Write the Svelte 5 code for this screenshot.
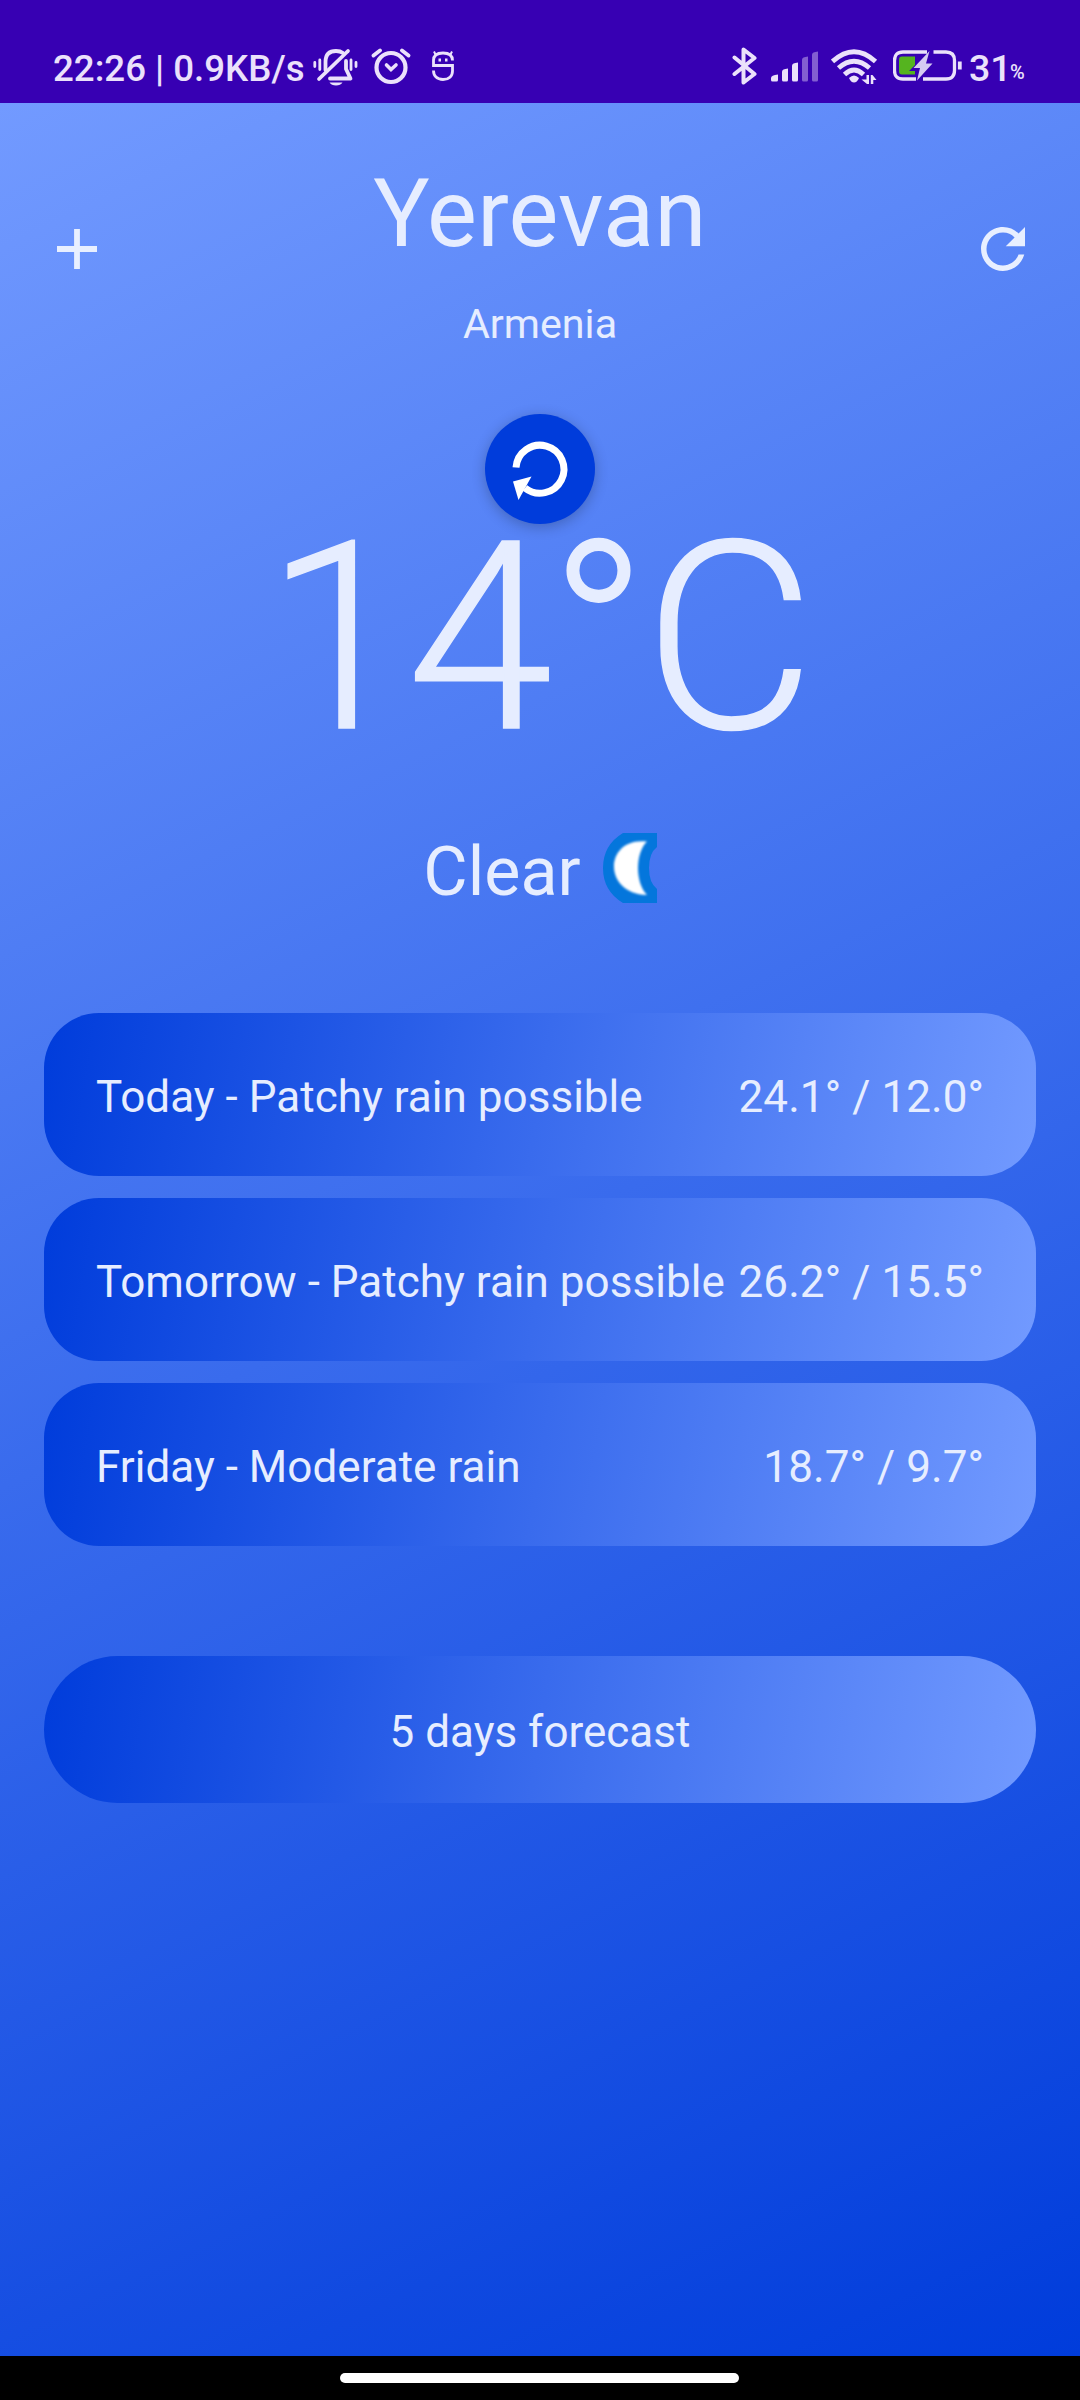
<script>
  const days = [
    { label: 'Today - Patchy rain possible', range: '24.1° / 12.0°' },
    { label: 'Tomorrow - Patchy rain possible', range: '26.2° / 15.5°' },
    { label: 'Friday - Moderate rain', range: '18.7° / 9.7°' }
  ];
</script>

<div class="screen">
  <header class="status">
    <span class="clock">22:26 | 0.9KB/s</span>
    <svg class="bell" width="46" height="40" viewBox="0 0 46 40" fill="none" stroke="#ebe1fb" stroke-width="3.800" stroke-linecap="round">
      <path d="M1.800 14.500v4M6.800 12v9.500M38 12v9.500M43 14.500v4" stroke-width="2.800" />
      <path d="M12.500 22V14C12.500 6 17 3 23 3C26 3 28 3.500 30 5" />
      <path d="M33 13V21L37.500 30.500H17" stroke-linejoin="round" />
      <path d="M6 31L35 3" />
      <path d="M16.500 34.500h13c-2 4-11 4-13 0z" fill="#ebe1fb" stroke="none" />
    </svg>
    <svg class="alarm" width="40" height="38" viewBox="0 0 40 38" fill="none" stroke="#ebe1fb" stroke-linecap="round">
      <circle cx="20" cy="20.500" r="14.500" stroke-width="4.200" />
      <path d="M2.500 8.500L9 3.500M37.500 8.500L31 3.500" stroke-width="3.800" />
      <path d="M15.500 18L20 22.500L25 18" stroke-width="3.600" />
    </svg>
    <svg class="robot" width="22" height="32" viewBox="0 0 22 32" fill="none" stroke="#ebe1fb" stroke-width="2.800">
      <path d="M1.500 10.500C1.500 5.500 5 3 11 3S20.500 5.500 20.500 10.500M1.500 9.500V15.500H20.500V21C20.500 26 17 29.500 11 29.500S1.500 26 1.500 20.500" />
      <path d="M3.500 4.500L2 1.500M18.500 4.500L20 1.500" stroke-width="2" />
      <path d="M6.500 10h2.500M13 10h2.500" stroke-width="3" />
    </svg>
    <span class="spacer"></span>
    <svg class="bluetooth" width="26" height="40" viewBox="0 0 26 40" fill="none" stroke="#ebe1fb" stroke-width="4" stroke-linecap="round" stroke-linejoin="round">
      <path d="M2.500 11.500L22.500 28L11.500 36.500V3.500L22.500 12L2.500 28" />
    </svg>
    <svg class="signal" width="48" height="31" viewBox="0 0 48 31" fill="#ebe1fb">
      <path d="M0 27Q0 24 7 23.500V29Q7 30.500 5.500 30.500H1.500Q0 30.500 0 29z" />
      <path d="M11 20.500Q11 18 17 17.500V29Q17 30.500 15.500 30.500H12.500Q11 30.500 11 29z" />
      <path d="M21 14.500Q21 12 27 11.500V29Q27 30.500 25.500 30.500H22.500Q21 30.500 21 29z" />
      <path opacity=".42" d="M31 8.500Q31 6 37 5.500V29Q37 30.500 35.500 30.500H32.500Q31 30.500 31 29z" />
      <path opacity=".42" d="M41 3.500Q41 1 47 .5V29Q47 30.500 45.500 30.500H42.500Q41 30.500 41 29z" />
    </svg>
    <svg class="wifi" width="48" height="36" viewBox="0 0 48 36" fill="none" stroke="#ebe1fb" stroke-width="4.800">
      <path d="M1.500 12.500Q23 -7 44.500 12.500" />
      <path d="M7.500 19Q23 5.500 38.500 19" />
      <path d="M13.500 25.500Q23 16.500 32.500 25.500" />
      <path d="M18 29Q23 24 28 29Q26 33.500 23 33.500T18 29z" fill="#ebe1fb" stroke="none" />
      <path d="M35.500 26H38V35H36L30.500 30.500H35.500zM39.800 35H42.300V31H45.500L41.500 26H39.800z" fill="#ebe1fb" stroke="none" />
    </svg>
    <svg class="battery" width="70" height="32" viewBox="0 0 70 32" fill="none">
      <path d="M23 29H10Q1.500 29 1.500 20.500V10.500Q1.500 2 10 2H34M40.500 2H53Q61.500 2 61.500 10.500V20.500Q61.500 29 53 29H30" stroke="#ebe1fb" stroke-width="3.300" />
      <path d="M9 6.500H22V15L16 21H22V24.500H9Q6 24.500 6 21.500V9.500Q6 6.500 9 6.500z" fill="#55b41f" />
      <path d="M36.500 1L20.500 18H27L24 30.500L39.500 13.500H33z" fill="#d6caf2" />
      <path d="M66.800 11.500V19.500" stroke="#ebe1fb" stroke-width="3.800" />
    </svg>
    <span class="level">31</span><span class="percent">%</span>
  </header>

  <main>
    <section class="place">
      <button class="add" aria-label="Add city">
        <svg width="40" height="40" viewBox="0 0 40 40"><path d="M20 0V40M0 20H40" stroke="#e8efff" stroke-width="5.800" /></svg>
      </button>
      <div class="names">
        <h1>Yerevan</h1>
        <p class="country">Armenia</p>
      </div>
      <button class="reload" aria-label="Reload">
        <svg width="66" height="66" viewBox="0 0 24 24" fill="#e8efff"><path d="M17.650 6.350C16.200 4.900 14.210 4 12 4c-4.420 0-7.990 3.580-7.990 8s3.570 8 7.990 8c3.730 0 6.840-2.550 7.730-6h-2.080c-.82 2.330-3.040 4-5.650 4-3.310 0-6-2.690-6-6s2.690-6 6-6c1.660 0 3.140.69 4.220 1.780L13 11h7V4l-2.350 2.350z" /></svg>
      </button>
    </section>

    <section class="now">
      <div class="spinner">
        <svg width="110" height="110" viewBox="0 0 110 110">
          <path d="M31 53.500A24 24 0 1 1 40 74" fill="none" stroke="#fff" stroke-width="7" />
          <path d="M28 67.500L46.500 62.500L33.500 86z" fill="#fff" />
        </svg>
      </div>
      <p class="temperature">14°C</p>
      <div class="condition">
        <span>Clear</span>
        <svg width="54" height="70" viewBox="0 0 54 70">
          <defs><filter id="soft"><feGaussianBlur stdDeviation="1.300" /></filter></defs>
          <path d="M20 0H54V14Q46 20 46 35T54 56V70H20Q0 58 0 35T20 0z" fill="#0476dc" />
          <path d="M44 8.500C2 3 -2 60 44 62C32 50 32 20 44 8.500z" fill="#fff" filter="url(#soft)" />
        </svg>
      </div>
    </section>

    <ul class="days">
      {#each days as day}
        <li><span>{day.label}</span><span class="range">{day.range}</span></li>
      {/each}
    </ul>

    <button class="forecast">5 days forecast</button>
  </main>

  <footer><span class="handle"></span></footer>
</div>

<style>
  :global(body) { margin: 0; }
  .screen {
    width: 1080px;
    height: 2400px;
    display: flex;
    flex-direction: column;
    overflow: hidden;
    font-family: Roboto, sans-serif;
    color: #e6edff;
  }
  h1, p, ul { margin: 0; padding: 0; font-weight: 400; }
  button { border: 0; padding: 0; background: none; font: inherit; color: inherit; }
  svg { display: block; flex: none; }

  .status {
    box-sizing: border-box;
    height: 103px;
    padding: 36px 54px 0 53px;
    display: flex;
    align-items: flex-start;
    background: #3700b3;
    color: #ebe1fb;
    font-weight: 500;
    white-space: nowrap;
  }
  .clock { width: 251px; font-size: 36.650px; line-height: 65px; }
  .bell { margin: 12px 0 0 9px; }
  .alarm { margin: 11px 0 0 12px; }
  .robot { margin: 14px 0 0 21px; }
  .spacer { flex: 1; }
  .bluetooth { margin-top: 10px; }
  .signal { margin: 15px 0 0 13px; }
  .wifi { margin: 13px 0 0 12px; }
  .battery { margin: 14px 0 0 14px; }
  .level { width: 41px; margin-left: 6px; font-size: 37.500px; line-height: 65px; }
  .percent { width: 16px; font-size: 20px; line-height: 73px; }

  main {
    height: 2253px;
    background: linear-gradient(154.400deg, #729aff, #003cdb);
  }
  .place { display: flex; height: 311px; justify-content: space-between; }
  .names { text-align: center; padding-top: 56px; }
  .add { width: 154px; height: 154px; margin-top: 69px; display: grid; place-items: center; }
  .reload { width: 154px; height: 154px; margin-top: 69px; display: grid; place-items: center; }
  h1 { font-size: 94px; line-height: 110px; letter-spacing: .300px; }
  .country { margin-top: 30px; font-size: 41.250px; line-height: 50px; }

  .now { display: flex; flex-direction: column; align-items: center; height: 599px; }
  .spinner {
    width: 110px;
    height: 110px;
    border-radius: 50%;
    background: #003cdb;
    box-shadow: 0 3px 14px rgba(0, 0, 0, .24);
  }
  .temperature {
    height: 310px;
    margin-top: -41px;
    padding-right: 4px;
    font-size: 263px;
    line-height: 310px;
    font-weight: 300;
    letter-spacing: -4.100px;
    -webkit-text-stroke: 1.500px #e6edff;
  }
  .condition { display: flex; margin-top: 40px; gap: 22px; font-size: 68.200px; line-height: 79px; }

  .days { display: grid; gap: 22px; margin: 0 44px; list-style: none; }
  .days li {
    box-sizing: border-box;
    height: 163px;
    padding: 4px 52px 0;
    display: flex;
    align-items: center;
    justify-content: space-between;
    border-radius: 55px;
    background: linear-gradient(99.300deg, #003cdb, #729aff);
    font-size: 44px;
    letter-spacing: .030px;
    white-space: nowrap;
  }
  .days .range { letter-spacing: .080px; }
  .forecast {
    display: block;
    width: 992px;
    height: 147px;
    margin: 110px 44px 0;
    padding-top: 4px;
    border-radius: 74px;
    background: linear-gradient(98.400deg, #003cdb, #729aff);
    font-size: 44px;
  }

  footer { height: 44px; background: #000; display: flex; justify-content: center; }
  .handle { width: 399px; height: 10px; margin: 17px 2px 0 0; border-radius: 5px; background: #fff; }
</style>
